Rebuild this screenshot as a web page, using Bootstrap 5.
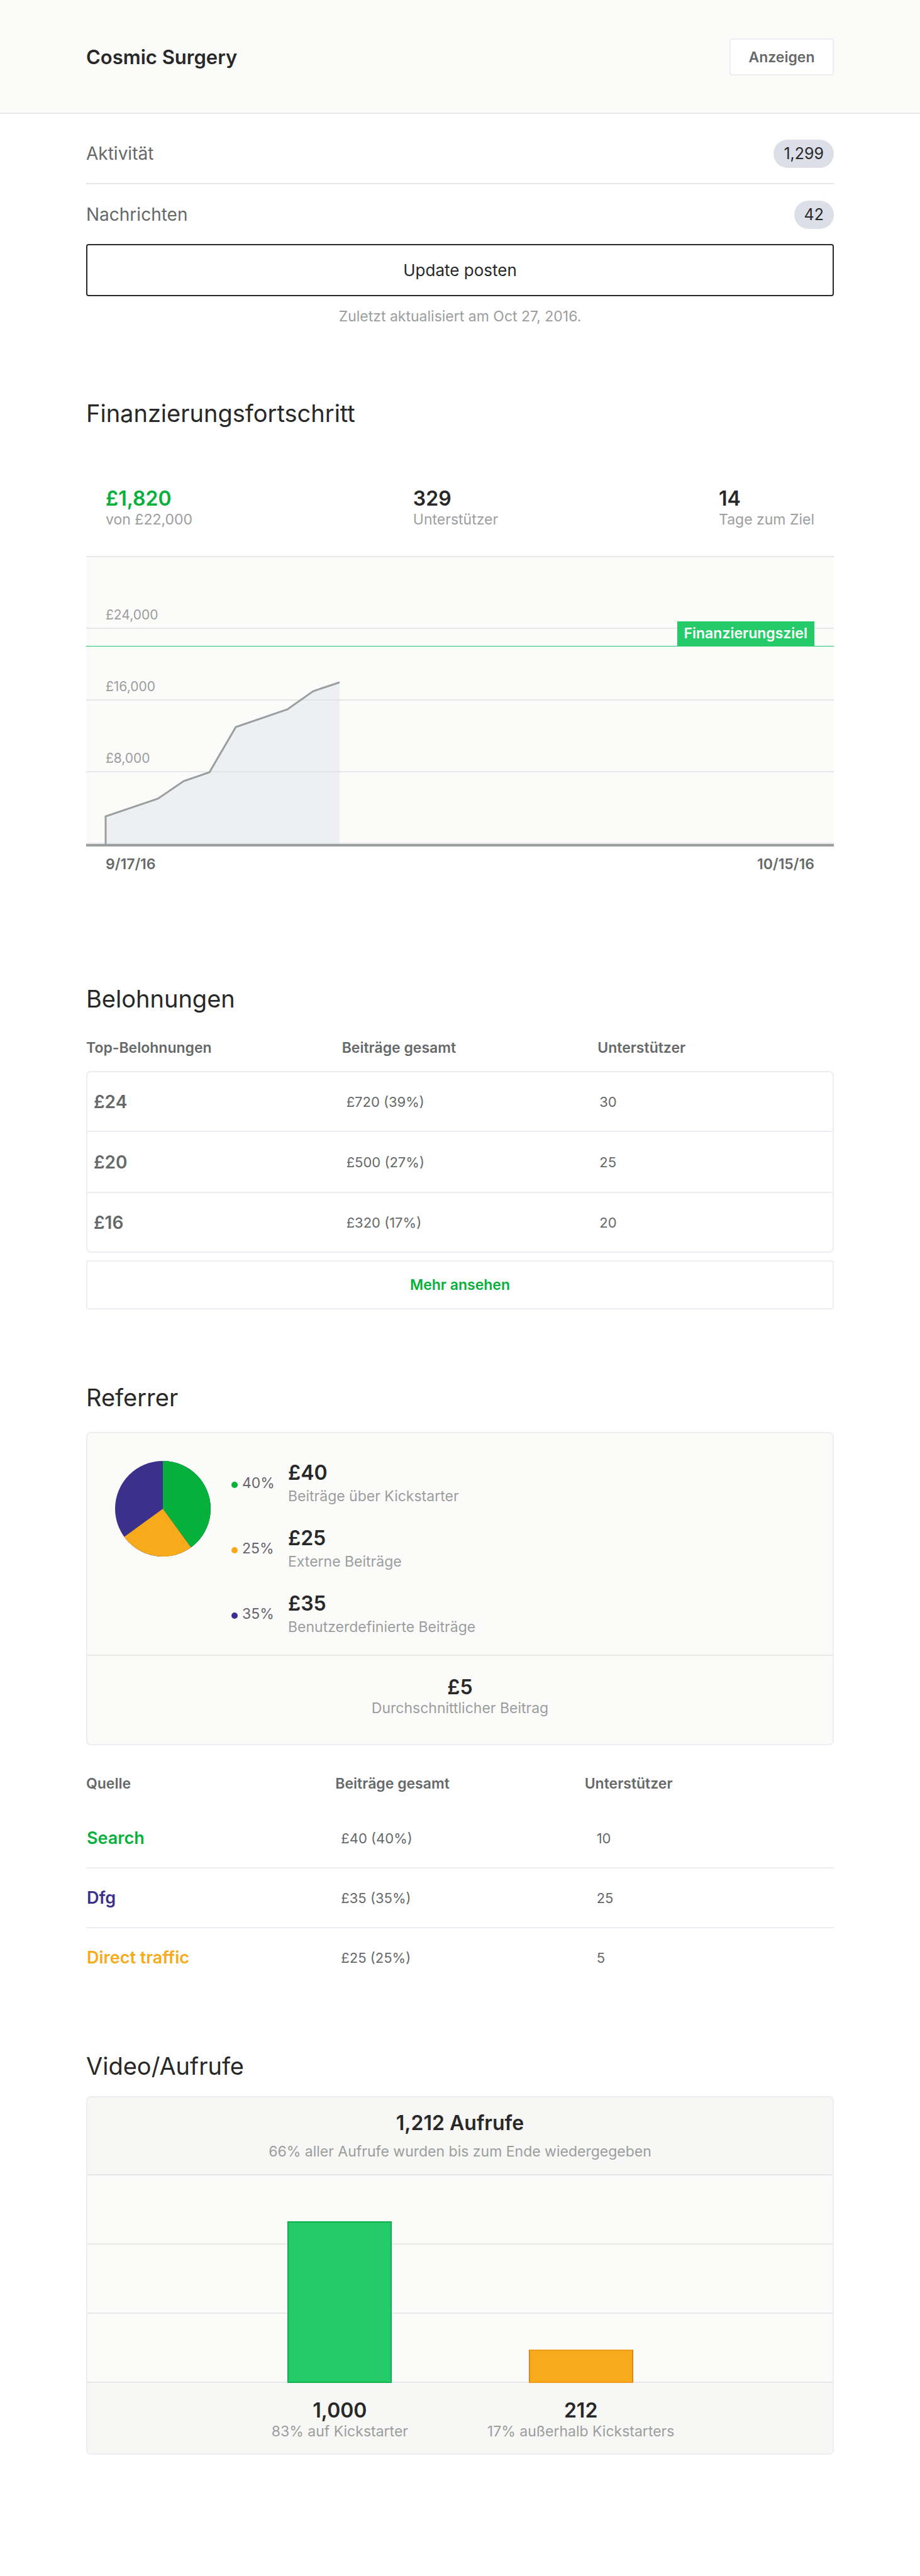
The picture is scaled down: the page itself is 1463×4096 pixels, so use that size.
<!DOCTYPE html>
<html lang="de">
<head>
<meta charset="utf-8">
<meta name="viewport" content="width=device-width, initial-scale=1">
<title>Cosmic Surgery</title>
<link href="https://cdn.jsdelivr.net/npm/bootstrap@5.3.0/dist/css/bootstrap.min.css" rel="stylesheet">
<style>
:root{--ink:#282828;--soft:#656969;--muted:#9b9e9e;--rule:#e6e7e6;--line:#edeef3;--paper:#fbfbfa;--panel:#f7f7f5;--green:#05b03b;--lime:#25cb68;--orange:#f7aa1a;--violet:#3b308c}
body{font-family:Inter,"Liberation Sans",sans-serif;color:var(--ink);font-size:23px;line-height:28px;background:#fff}
.page{padding-left:137px;padding-right:137px}
.topbar{background:var(--paper);border-bottom:2px solid var(--rule);padding-top:61px;padding-bottom:59px}
.topbar h1{font-size:31px;line-height:38px;font-weight:600}
.btn{padding:0;font-size:23px;line-height:28px;font-weight:600;border-width:2px;border-radius:4px}
.btn-show{width:166px;height:59px;background:#fff;border-color:var(--line);color:var(--soft)}
.btn-update{height:83px;border-color:var(--ink);color:var(--ink);font-size:26px;font-weight:400}
.btn-more{height:78px;border-color:var(--line);color:var(--green);margin-top:12px}
.links{padding-top:15px}
.links a{padding:26px 0 24px;color:var(--soft);font-size:28px;line-height:45px;text-decoration:none}
.links a+a{border-top:2px solid var(--rule)}
.pill{background:#dcdee8;color:var(--ink);font-size:25px;font-weight:400;line-height:45px;padding:0 16px;border-radius:23px}
.updated{padding-top:16px;line-height:32px}
.faint{color:var(--muted)}
h2{font-size:38px;line-height:50px;font-weight:400;margin:0}
.figure-num{font-size:32px;line-height:38px;font-weight:600}
.go{color:var(--green)}
.stats{padding:92px 31px 44px}
.funding{border-top:2px solid var(--rule);border-bottom:4px solid #999e9e;background:var(--paper)}
.grid-row{height:114px;border-bottom:2px solid var(--rule);padding:0 31px 6px;font-size:21px}
.curve{position:absolute;left:0;top:0;width:100%;height:100%}
.goal{position:absolute;left:0;right:0;top:102px;border-bottom:1px solid var(--lime);padding-right:31px}
.goal span{background:var(--lime);color:#fff;font-weight:600;line-height:39px;padding:0 11px}
.dates{padding:14px 31px 0;font-weight:600;color:var(--soft)}
.sheet{width:100%;table-layout:fixed;border-collapse:separate;border-spacing:0;color:var(--soft)}
.sheet th{font-weight:600}
.sheet td{height:97px;font-size:22px;vertical-align:middle;border-bottom:2px solid var(--line)}
.sheet td:first-child{font-size:28px;font-weight:600}
.rewards thead th{padding:39px 0 23px}
.rewards td:nth-child(1){padding-left:10px;border-left:2px solid var(--line)}
.rewards td:nth-child(2){padding-left:7px}
.rewards td:nth-child(3){padding-left:3px;border-right:2px solid var(--line)}
.rewards tr:first-child td{border-top:2px solid var(--line)}
.rewards tr:last-child td{height:95px}
.rewards tr:first-child td:first-child{border-top-left-radius:7px}
.rewards tr:first-child td:last-child{border-top-right-radius:7px}
.rewards tr:last-child td:first-child{border-bottom-left-radius:7px}
.rewards tr:last-child td:last-child{border-bottom-right-radius:7px}
.sources thead th{padding:47px 0 26px}
.sources td{height:95px}
.sources td:first-child{font-size:27px}
.sources td:nth-child(2){padding-left:9px}
.sources td:nth-child(3){padding-left:19px}
.sources tr:last-child td{height:93px;border:0}
.sources a{text-decoration:none}
.tone-green{color:var(--green)}.tone-violet{color:var(--violet)}.tone-orange{color:var(--orange)}
.panel{border:2px solid var(--line);border-radius:7px;background:var(--paper);overflow:hidden}
.split{padding:44px 44px 30px;gap:33px}
.pie{width:152px;height:152px;flex:none}
.legend-list{gap:34px}
.dot{width:10px;height:10px;border-radius:50%;background:currentColor;margin:6px 7px 0 0}
.share{width:73px;color:#66656e}
.label-gap{margin-top:4px}
.average{border-top:2px solid var(--rule);padding:31px 0 43px}
.views-head{background:var(--panel);border-bottom:2px solid var(--rule);padding:22px 0}
.views-sub{margin-top:12px}
.plot{background:repeating-linear-gradient(var(--paper) 0 108px,var(--rule) 108px 110px);height:330px}
.pair{padding-left:17.7%}
.pair>div{width:39.3%}
.col-bar{width:166px;border:2px solid}
.bar-in{background:var(--lime);border-color:#0db34a}
.bar-out{background:var(--orange);border-color:#ee9a1a #e58410}
.views-foot{background:var(--panel);padding-top:25px;padding-bottom:21px}
.gap-funding{padding-top:113px}.gap-rewards{padding-top:175px}.gap-referrer{padding-top:115px}.gap-video{padding-top:101px}
.gap-referrer h2{margin-bottom:30px}.gap-video h2{margin-bottom:23px}
</style>
<script src="https://cdn.jsdelivr.net/npm/bootstrap@5.3.0/dist/js/bootstrap.bundle.min.js"></script>
</head>
<body>
<header class="topbar page d-flex justify-content-between align-items-center">
  <h1 class="m-0">Cosmic Surgery</h1>
  <button type="button" class="btn btn-show">Anzeigen</button>
</header>
<main class="page">
  <nav class="links">
    <a href="#" class="d-flex justify-content-between"><span>Aktivität</span><span class="pill">1,299</span></a>
    <a href="#" class="d-flex justify-content-between"><span>Nachrichten</span><span class="pill">42</span></a>
  </nav>
  <button type="button" class="btn btn-update w-100 d-block">Update posten</button>
  <p class="updated faint text-center m-0">Zuletzt aktualisiert am Oct 27, 2016.</p>

  <section class="gap-funding">
    <h2>Finanzierungsfortschritt</h2>
    <div class="stats d-flex justify-content-between">
      <div><div class="figure-num go">£1,820</div><div class="faint">von £22,000</div></div>
      <div><div class="figure-num">329</div><div class="faint">Unterstützer</div></div>
      <div><div class="figure-num">14</div><div class="faint">Tage zum Ziel</div></div>
    </div>
    <div class="funding position-relative">
      <div class="grid-row d-flex align-items-end faint">£24,000</div>
      <div class="grid-row d-flex align-items-end faint">£16,000</div>
      <div class="grid-row d-flex align-items-end faint">£8,000</div>
      <div class="grid-row"></div>
      <svg class="curve" viewBox="0 0 1189 456" preserveAspectRatio="none" aria-hidden="true">
        <path d="M31 456V412L114 384L155 356L196 342L238 270L320 242L361 213L403 199V456Z" fill="#dcdee8" fill-opacity=".4"/>
        <path d="M31 456V412L114 384L155 356L196 342L238 270L320 242L361 213L403 199" fill="none" stroke="#9b9e9e" stroke-width="3"/>
      </svg>
      <div class="goal d-flex justify-content-end"><span>Finanzierungsziel</span></div>
    </div>
    <div class="dates d-flex justify-content-between"><span>9/17/16</span><span>10/15/16</span></div>
  </section>

  <section class="gap-rewards">
    <h2>Belohnungen</h2>
    <table class="sheet rewards">
      <colgroup><col style="width:34.2%"><col style="width:34.2%"><col></colgroup>
      <thead><tr><th scope="col">Top-Belohnungen</th><th scope="col">Beiträge gesamt</th><th scope="col">Unterstützer</th></tr></thead>
      <tbody>
        <tr><td>£24</td><td>£720 (39%)</td><td>30</td></tr>
        <tr><td>£20</td><td>£500 (27%)</td><td>25</td></tr>
        <tr><td>£16</td><td>£320 (17%)</td><td>20</td></tr>
      </tbody>
    </table>
    <button type="button" class="btn btn-more w-100 d-block">Mehr ansehen</button>
  </section>

  <section class="gap-referrer">
    <h2>Referrer</h2>
    <div class="panel">
      <div class="split d-flex">
        <svg class="pie" viewBox="-50 -50 100 100" role="img" aria-label="Anteile der Beiträge">
          <circle r="50" fill="#3b308c"/>
          <path d="M0 0V-50A50 50 0 0 1 29.39 40.45Z" fill="#05b03b"/>
          <path d="M0 0L29.39 40.45A50 50 0 0 1 -40.45 29.39Z" fill="#f7aa1a"/>
        </svg>
        <div class="legend-list d-flex flex-column">
          <div class="d-flex align-items-center"><span class="dot tone-green"></span><span class="share">40%</span><div><div class="figure-num">£40</div><div class="faint label-gap">Beiträge über Kickstarter</div></div></div>
          <div class="d-flex align-items-center"><span class="dot tone-orange"></span><span class="share">25%</span><div><div class="figure-num">£25</div><div class="faint label-gap">Externe Beiträge</div></div></div>
          <div class="d-flex align-items-center"><span class="dot tone-violet"></span><span class="share">35%</span><div><div class="figure-num">£35</div><div class="faint label-gap">Benutzerdefinierte Beiträge</div></div></div>
        </div>
      </div>
      <div class="average text-center"><div class="figure-num">£5</div><div class="faint">Durchschnittlicher Beitrag</div></div>
    </div>
    <table class="sheet sources">
      <thead><tr><th scope="col">Quelle</th><th scope="col">Beiträge gesamt</th><th scope="col">Unterstützer</th></tr></thead>
      <tbody>
        <tr><td><a href="#" class="tone-green">Search</a></td><td>£40 (40%)</td><td>10</td></tr>
        <tr><td><a href="#" class="tone-violet">Dfg</a></td><td>£35 (35%)</td><td>25</td></tr>
        <tr><td><a href="#" class="tone-orange">Direct traffic</a></td><td>£25 (25%)</td><td>5</td></tr>
      </tbody>
    </table>
  </section>

  <section class="gap-video">
    <h2>Video/Aufrufe</h2>
    <div class="panel">
      <div class="views-head text-center"><div class="figure-num">1,212 Aufrufe</div><div class="faint views-sub">66% aller Aufrufe wurden bis zum Ende wiedergegeben</div></div>
      <div class="plot pair d-flex align-items-end">
        <div class="d-flex justify-content-center"><div class="col-bar bar-in" style="height:257px"></div></div>
        <div class="d-flex justify-content-center"><div class="col-bar bar-out" style="height:53px"></div></div>
      </div>
      <div class="views-foot pair d-flex text-center">
        <div><div class="figure-num">1,000</div><div class="faint">83% auf Kickstarter</div></div>
        <div><div class="figure-num">212</div><div class="faint">17% außerhalb Kickstarters</div></div>
      </div>
    </div>
  </section>
</main>
</body>
</html>
